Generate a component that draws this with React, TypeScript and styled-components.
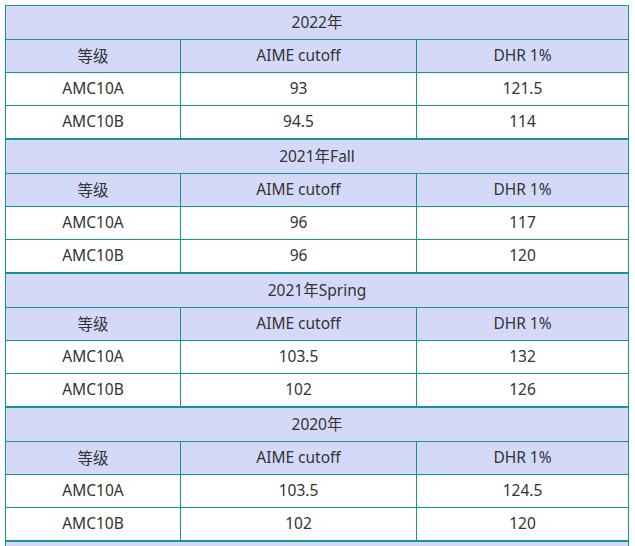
import styled, { createGlobalStyle } from "styled-components";

const GlobalStyle = createGlobalStyle`
  body {
    margin: 0;
    background: #fff;
    font-family: "Noto Sans", "Noto Sans CJK SC", sans-serif;
  }
`;

type Section = {
  title: string;
  rows: [string, string, string][];
};

const sections: Section[] = [
  { title: "2022年", rows: [["AMC10A", "93", "121.5"], ["AMC10B", "94.5", "114"]] },
  { title: "2021年Fall", rows: [["AMC10A", "96", "117"], ["AMC10B", "96", "120"]] },
  { title: "2021年Spring", rows: [["AMC10A", "103.5", "132"], ["AMC10B", "102", "126"]] },
  { title: "2020年", rows: [["AMC10A", "103.5", "124.5"], ["AMC10B", "102", "120"]] },
];

function App() {
  return (
    <>
      <GlobalStyle />
      <Page>
        {sections.map((s) => (
          <Block key={s.title}>
            <TitleRow>{s.title}</TitleRow>
            <Row $head>
              <Cell>等级</Cell>
              <Cell>AIME cutoff</Cell>
              <Cell>DHR 1%</Cell>
            </Row>
            {s.rows.map((r) => (
              <Row key={r[0]}>
                {r.map((v, i) => (
                  <Cell key={i}>{v}</Cell>
                ))}
              </Row>
            ))}
          </Block>
        ))}
        {/* next section starts just below the fold */}
        <Block>
          <TitleRow />
        </Block>
      </Page>
    </>
  );
}

export default App;

const Page = styled.div`
  padding: 5px 0 0 5px;
  width: 624px;
  height: 541px;
  overflow: hidden;
`;

const Block = styled.div`
  border: 1px solid #14968a;
  display: grid;
  grid-template-rows: 33px 32px 32px 32px;
  row-gap: 1px;
  background: #14968a;
`;

const TitleRow = styled.div`
  background: #d5d9f8;
  color: #333;
  font-size: 15.5px;
  padding-bottom: 2px;
  display: flex;
  align-items: center;
  justify-content: center;
`;

const Row = styled.div<{ $head?: boolean }>`
  display: grid;
  grid-template-columns: 174px 235px 1fr;
  column-gap: 1px;
  background: #14968a;
  & > div {
    background: ${(p) => (p.$head ? "#d5d9f8" : "#fff")};
  }
`;

const Cell = styled.div`
  color: #333;
  font-size: 15.5px;
  padding-bottom: 2px;
  display: flex;
  align-items: center;
  justify-content: center;
`;
